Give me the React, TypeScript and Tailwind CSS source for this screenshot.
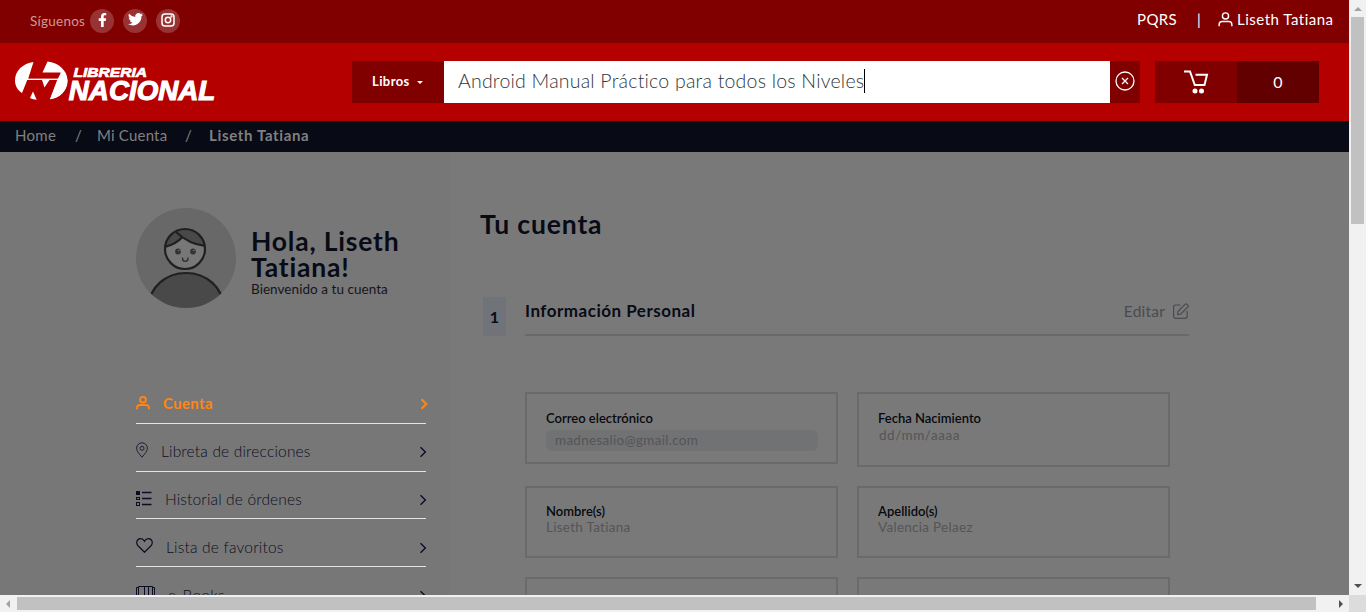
import React from "react";

type IconProps = { className?: string };

const UserIcon = ({ className }: IconProps) => (
  <svg viewBox="0 0 16 16" fill="none" stroke="currentColor" className={className}>
    <circle cx="8" cy="4.2" r="3.3" />
    <path d="M1.2 15.2v-1.7c0-2 1.2-3.3 3.2-3.3h7.2c2 0 3.2 1.3 3.2 3.3v1.7" />
  </svg>
);

const Chevron = ({ className }: IconProps) => (
  <svg viewBox="0 0 8 12" fill="none" stroke="currentColor" className={className}>
    <path d="M1.5 1.2 6.4 6l-4.9 4.8" />
  </svg>
);

const PinIcon = () => (
  <svg viewBox="0 0 12 16" fill="none" stroke="currentColor" strokeWidth="1" className="h-4 w-3 opacity-80">
    <path d="M6 15.2C3 11.8.6 9 .6 6.2a5.4 5.4 0 0 1 10.8 0C11.4 9 9 11.8 6 15.2Z" />
    <circle cx="6" cy="6.3" r="2" />
  </svg>
);

const ListIcon = () => (
  <svg viewBox="0 0 16 16" fill="none" stroke="currentColor" className="h-4 w-4">
    <rect x="0.5" y="1.5" width="3" height="3" fill="currentColor" />
    <rect x="0.5" y="7.5" width="3" height="2" />
    <rect x="0.5" y="12.5" width="3" height="3" />
    <path d="M6 2.500h9.500M6 8.500h9.500M6 14.500h9.500" strokeWidth="1.400" />
  </svg>
);

const HeartIcon = () => (
  <svg viewBox="0 0 17 15" fill="none" stroke="currentColor" strokeWidth="1.2" className="h-[15px] w-[17px]">
    <path d="M8.5 14.2 2 7.8C-.3 5.3.7 1 4.3.7 6.4.6 7.700 1.700 8.500 3.200 9.300 1.700 10.600.6 12.700.7c3.600.3 4.600 4.600 2.300 7.100Z" />
  </svg>
);

const BooksIcon = () => (
  <svg viewBox="0 0 20 16" fill="none" stroke="currentColor" strokeWidth="1" className="h-4 w-5">
    <path d="M2.500.5h14v14h-14zM8.500.5v14M12.500.5v14M2.500 1.500h-2v14h2M16.500 1.500h2v14h-2" />
  </svg>
);

const Logo = () => (
  <svg viewBox="0 0 202 42" className="h-[42px] w-[202px]" fill="#fff">
    <path d="M18.500 1 13.300 17.500H42.800L46 11.500H27.500L32.500.5C43.500 1.600 52.500 9.500 52.500 19.500 52.500 29.500 44.500 37 35 38.300L42.800 19H12.300L7 32C3 29.500 0 25 0 19.500 0 9.500 8 2.500 18.500 1Z" />
    <path d="M46 11 42 19.500 35 38.300C45 37 52.500 29.500 52.500 19.500L50 11Z" />
    <path d="M27 19h7.500L29.500 26.500Z" />
    <path d="m18 30.500 3.700 8.300c-2.200 0-4.500-.7-6.700-1.700Z" />
    <path d="M27.800 12.200H45.500L43 17.300H13.700L15.200 12.200Z" fill="#b50000" />
    <g fontFamily="'Liberation Sans', Arial, sans-serif" fontWeight="700" fontStyle="italic" stroke="#fff">
      <text x="58.500" y="16" fontSize="13.500" textLength="73.500" lengthAdjust="spacingAndGlyphs" strokeWidth="0.700">LIBRERIA</text>
      <text x="53.800" y="38.800" fontSize="27.500" textLength="146.500" lengthAdjust="spacingAndGlyphs" strokeWidth="1.100">NACIONAL</text>
    </g>
  </svg>
);

const Avatar = () => (
  <svg viewBox="0 0 100 100" className="size-[100px] shrink-0">
    <defs>
      <clipPath id="disc"><circle cx="50" cy="50" r="50" /></clipPath>
      <clipPath id="head"><circle cx="49" cy="41" r="20" /></clipPath>
    </defs>
    <g clipPath="url(#disc)">
      <rect width="100" height="100" fill="#686868" />
      <ellipse cx="50" cy="98" rx="37" ry="33" fill="#494949" stroke="#202020" strokeWidth="2.200" />
      <circle cx="49" cy="41" r="20" fill="#777" />
      <g clipPath="url(#head)">
        <path d="M28 39c8-1.500 14-5 18.500-10C53 34 60 37 70 38V18H28Z" fill="#494949" />
        <path d="M28 39c8-1.500 14-5 19-10.500M40 24c8 7.500 18 13 30 14" fill="none" stroke="#202020" strokeWidth="2.200" />
      </g>
      <circle cx="49" cy="41" r="20" fill="none" stroke="#202020" strokeWidth="2.200" />
      <circle cx="42" cy="43.500" r="2.900" fill="#333" />
      <circle cx="57" cy="43.500" r="2.900" fill="#333" />
      <circle cx="43" cy="42.500" r="0.800" fill="#777" />
      <circle cx="58" cy="42.500" r="0.800" fill="#777" />
      <path d="M46.500 49.500v1c0 3.800 5.500 3.800 5.500 0v-1" fill="none" stroke="#303030" strokeWidth="1.400" />
    </g>
  </svg>
);

const FacebookIcon = () => (
  <svg viewBox="0 0 320 512" fill="currentColor" className="h-[14px] w-[9px]">
    <path d="m279.140 288 14.220-92.660h-88.910v-60.130c0-25.350 12.420-50.060 52.240-50.060h40.420V6.260S260.430 0 225.360 0c-73.220 0-121.080 44.380-121.080 124.720v70.620H22.890V288h81.390v224h100.170V288z" />
  </svg>
);

const TwitterIcon = () => (
  <svg viewBox="0 0 24 20" fill="currentColor" className="h-[12.500px] w-[15px]">
    <path d="M24 2.400a10 10 0 0 1-2.800.8A5 5 0 0 0 23.300.500a10 10 0 0 1-3.100 1.200 4.900 4.900 0 0 0-8.400 4.500A14 14 0 0 1 1.700 1.100a4.900 4.900 0 0 0 1.500 6.500 5 5 0 0 1-2.200-.6 4.900 4.900 0 0 0 3.900 4.900 5 5 0 0 1-2.200.1 4.900 4.900 0 0 0 4.600 3.400A9.900 9.900 0 0 1 0 17.500a14 14 0 0 0 21.500-12.400A10 10 0 0 0 24 2.400Z" />
  </svg>
);

const InstagramIcon = () => (
  <svg viewBox="0 0 14 14" fill="none" stroke="currentColor" strokeWidth="1.500" className="size-[14px]">
    <rect x="1" y="1" width="12" height="12" rx="3" />
    <circle cx="7" cy="7" r="2.700" />
    <circle cx="10.500" cy="3.500" r="0.400" />
  </svg>
);

const social = [FacebookIcon, TwitterIcon, InstagramIcon];

const Header = () => (
  <header className="shrink-0 text-white">
    <div className="flex h-[43px] items-start justify-between bg-[#800000] pl-[30px] pr-4">
      <div className="flex items-center pt-[9px]">
        <span className="w-[60px] whitespace-nowrap text-[13.5px] leading-6 tracking-[0.25px] text-[#cc9999]">Síguenos</span>
        <div className="flex gap-[9px]">
          {social.map((Icon, i) => (
            <span key={i} className="flex size-6 items-center justify-center rounded-full bg-[#993333] pb-[3px]">
              <Icon />
            </span>
          ))}
        </div>
      </div>
      <div className="flex pt-2 text-[15px] leading-[22px]">
        <span className="w-[60px] tracking-[0.4px]">PQRS</span>
        <span className="w-[21px]">|</span>
        <UserIcon className="mr-1 mt-1 size-[15px] stroke-[1.5]" />
        <span className="w-[96px] whitespace-nowrap tracking-[0.5px]">Liseth Tatiana</span>
      </div>
    </div>
    <div className="flex h-[78px] items-start bg-[#b50000] pt-[18px]">
      <div className="ml-[15px] w-[337px]"><Logo /></div>
      <button className="flex h-[42px] w-[92px] items-center bg-[#800000] pl-5 text-[13px] font-bold">
        <span className="w-[45px] text-left tracking-[0.4px]">Libros</span>
        <span className="h-0 w-0 border-x-[3.5px] border-t-[3.5px] border-x-transparent border-t-white" />
      </button>
      <div className="flex h-[42px] w-[666px] items-center bg-white pl-[14px] text-[19.5px] text-[#30363c]">
        <span className="-mt-0.5 whitespace-nowrap font-light tracking-[0.22px]">Android Manual Práctico para todos los Niveles</span>
        <span className="-mt-0.5 h-6 w-px bg-black" />
      </div>
      <button className="flex h-[42px] w-[30px] items-center justify-center bg-[#800000]">
        <svg viewBox="0 0 20 20" fill="none" stroke="currentColor" strokeWidth="1.3" className="-mt-[3px] size-5">
          <circle cx="10" cy="10" r="9" />
          <path d="m7 7 6 6m0-6-6 6" />
        </svg>
      </button>
      <div className="ml-[15px] flex h-[42px] w-[82px] items-center justify-center bg-[#800000]">
        <svg viewBox="0 0 26 24" fill="none" stroke="currentColor" strokeWidth="2" className="h-6 w-[26px]">
          <path d="M1 1.500h6l4.800 13.500h9.700L24 4.800H12.500" />
          <circle cx="12" cy="21" r="1.500" fill="currentColor" />
          <circle cx="18.500" cy="21" r="1.500" fill="currentColor" />
        </svg>
      </div>
      <div className="flex h-[42px] w-[82px] items-center justify-center bg-[#620000] text-base">0</div>
    </div>
    <nav className="flex h-[31px] items-center bg-[#080b15] pb-0.5 pl-[15px] text-[15px] text-[#808080]">
      <span className="w-[60px] tracking-[0.3px]">Home</span>
      <span className="w-[22px]">/</span>
      <span className="w-[88px] tracking-[0.2px]">Mi Cuenta</span>
      <span className="w-6">/</span>
      <span className="font-bold tracking-[0.65px]">Liseth Tatiana</span>
    </nav>
  </header>
);

const menu = [
  { label: "Libreta de direcciones", Icon: PinIcon, text: "pl-[13px] tracking-[0.18px]", row: "h-12 pt-2" },
  { label: "Historial de órdenes", Icon: ListIcon, text: "pl-[13px] tracking-[0.15px]", row: "h-[47px] pt-[9px]" },
  { label: "Lista de favoritos", Icon: HeartIcon, text: "pl-[13px] tracking-[0.2px]", row: "h-12 pt-2.5" },
  { label: "e-Books", Icon: BooksIcon, text: "pl-3 tracking-[0.3px]", row: "h-12 pt-2.5" },
];

const Sidebar = () => (
  <aside className="w-[450px] shrink-0 bg-[#777] pl-[136px] pt-14">
    <div className="flex h-[100px]">
      <Avatar />
      <div className="pl-[15px] pt-5">
        <h2 className="w-[170px] text-[26.5px] font-bold leading-[26px] tracking-[0.8px] text-[#080b15]">Hola, Liseth Tatiana!</h2>
        <p className="pt-px text-[13.5px] leading-[17px] tracking-[0.05px] text-[#15151c]">Bienvenido a tu cuenta</p>
      </div>
    </div>
    <div className="mt-[76px] w-[290px]">
      <div className="flex h-10 items-center border-b border-[#e3e3e3] text-[15px] font-bold text-[#ff8614]">
        <UserIcon className="-mt-0.5 mr-[13px] size-[14px] stroke-[2.2]" />
        <span className="flex-1 tracking-[0.35px]">Cuenta</span>
        <Chevron className="-mr-0.5 mt-px h-3 w-2 stroke-[2.2]" />
      </div>
      {menu.map(({ label, Icon, text, row }) => (
        <div key={label} className={`flex items-center border-b border-[#e3e3e3] text-[15.5px] text-[#0b0e22] ${row}`}>
          <span className="-mt-1"><Icon /></span>
          <span className={`flex-1 font-light ${text}`}>{label}</span>
          <Chevron className="-mr-px h-3 w-2 stroke-[1.4]" />
        </div>
      ))}
    </div>
  </aside>
);

const Field = ({ label, className, children }: { label?: string; className: string; children?: React.ReactNode }) => (
  <div className={`border-2 border-[#6a6a6a] px-[19px] ${className}`}>
    {label && <div className="text-[13px] font-semibold leading-4 text-[#07090f]">{label}</div>}
    {children}
  </div>
);

const Account = () => (
  <main className="flex-1 bg-[#797979] pl-[30px]">
    <h1 className="mt-[54px] text-[26.5px] font-bold leading-9 tracking-[0.85px] text-[#080b15]">Tu cuenta</h1>
    <div className="mt-[55px] flex pl-[3px]">
      <span className="flex h-[39px] w-[23px] items-center justify-center bg-[#71737b] text-base font-bold text-[#080b15]">1</span>
      <div className="ml-[19px] flex h-[39px] w-[664px] items-start justify-between border-b-2 border-[#696969] text-[#080b15]">
        <h3 className="pt-0.5 text-[17px] font-bold leading-6 tracking-[0.5px]">Información Personal</h3>
        <span className="flex items-start pt-0.5 text-[15.5px] leading-6 text-[#494b50]">
          <span className="mr-2 tracking-[0.2px]">Editar</span>
          <svg viewBox="0 0 16 16" fill="none" stroke="currentColor" strokeWidth="1.2" className="mt-1 size-4">
            <path d="M7.500 2H2.800C1.300 2 .6 2.700.6 4.200v8.900c0 1.500.7 2.200 2.200 2.200H12c1.500 0 2.200-.7 2.200-2.200V8" />
            <path d="m5 8.500 7.200-7.300c.5-.5 1-.5 1.500 0l1.200 1.200c.5.500.5 1 0 1.500L7.700 11.100 4.600 11.500Z" />
          </svg>
        </span>
      </div>
    </div>
    <div className="mt-14 flex gap-[19px] pl-[45px] text-[13.5px] text-[#555]">
      <div className="w-[313px]">
        <Field label="Correo electrónico" className="h-[72px] pt-4">
          <div className="mt-1 h-[21px] w-[272px] rounded-md bg-[#717274] pl-[9px] leading-5 tracking-[0.28px]">madnesalio@gmail.com</div>
        </Field>
        <Field label="Nombre(s)" className="mt-[22px] h-[72px] pt-[15px]"><div className="leading-4 tracking-[0.28px]">Liseth Tatiana</div></Field>
        <Field className="mt-[19px] h-[72px]" />
      </div>
      <div className="w-[313px]">
        <Field label="Fecha Nacimiento" className="h-[75px] pt-4"><div className="pl-px leading-[18px] tracking-[0.55px]">dd/mm/aaaa</div></Field>
        <Field label="Apellido(s)" className="mt-[19px] h-[72px] pt-[15px]"><div className="leading-4 tracking-[0.28px]">Valencia Pelaez</div></Field>
        <Field className="mt-[19px] h-[72px]" />
      </div>
    </div>
  </main>
);

const Arrow = ({ className }: IconProps) => (
  <svg viewBox="0 0 8 8" fill="currentColor" className={`size-2 ${className ?? ""}`}><path d="M0 6 4 2l4 4Z" /></svg>
);

export default function App() {
  return (
    <div className="flex h-[612px] w-[1366px] flex-col overflow-hidden bg-[#f1f1f1] font-['Lato',sans-serif]">
      <div className="flex h-[595px]">
        <div className="flex h-full w-[1349px] flex-col overflow-hidden">
          <Header />
          <div className="flex min-h-0 flex-1 overflow-hidden">
            <Sidebar />
            <Account />
          </div>
        </div>
        <div className="flex w-[17px] flex-col items-center py-[5px]">
          <Arrow className="text-[#a3a3a3]" />
          <div className="mt-1 h-[207px] w-[13px] bg-[#c1c1c1]" />
          <Arrow className="mt-auto rotate-180 text-[#505050]" />
        </div>
      </div>
      <div className="flex h-[17px]">
        <div className="flex w-[1349px] items-center pl-1 pr-1">
          <Arrow className="-rotate-90 text-[#a3a3a3]" />
          <div className="ml-[5px] h-[13px] w-[1299px] bg-[#c1c1c1]" />
          <Arrow className="ml-auto rotate-90 text-[#505050]" />
        </div>
        <div className="w-[17px] bg-[#dcdcdc]" />
      </div>
    </div>
  );
}
